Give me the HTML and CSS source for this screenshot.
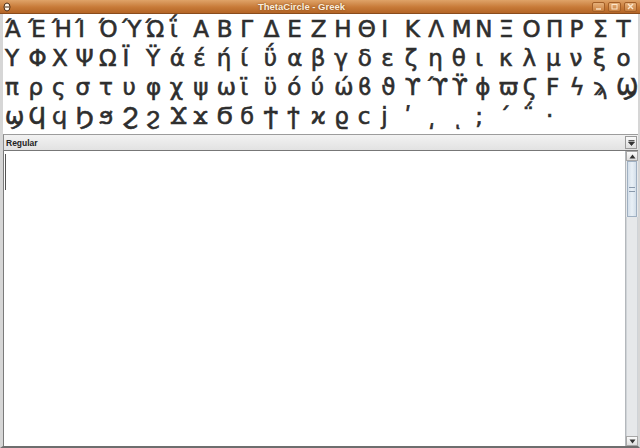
FILE: index.html
```html
<!DOCTYPE html>
<html lang="el">
<head>
    <meta charset="UTF-8">
    <title>ThetaCircle - Greek</title>
    <link rel="stylesheet" href="styles.css">
</head>
<body>
    <div class="window">
        <div class="titlebar">
            <svg class="app-icon" width="8" height="10" viewBox="0 0 8 10">
                <ellipse cx="4" cy="5" rx="3" ry="4" fill="#fff7ea" stroke="#4a2a10" stroke-width="1"/>
                <line x1="1.5" y1="5" x2="6.5" y2="5" stroke="#4a2a10" stroke-width="1"/>
            </svg>
            <div class="title">ThetaCircle - Greek</div>
            <div class="win-buttons">
                <div class="win-btn">
                    <svg width="7" height="7" viewBox="0 0 7 7"><line x1="1" y1="6" x2="6" y2="6" stroke="#fbe6cc" stroke-width="1.4"/></svg>
                </div>
                <div class="win-btn">
                    <svg width="7" height="7" viewBox="0 0 7 7"><rect x="1" y="1.5" width="5" height="4.5" fill="none" stroke="#fbe6cc" stroke-width="1"/></svg>
                </div>
                <div class="win-btn">
                    <svg width="7" height="7" viewBox="0 0 7 7"><path d="M1 1 L6 6 M6 1 L1 6" stroke="#fbe6cc" stroke-width="1.4"/></svg>
                </div>
            </div>
        </div>
        <div class="frame">
            <div class="charmap" id="charmap"></div>
            <div class="combo">
                <div class="combo-label">Regular</div>
                <div class="combo-btn">
                    <svg width="7" height="6" viewBox="0 0 7 6"><path d="M0.5 0.5 H6.5 M0.5 2 H6.5 L3.5 5.5 Z" fill="#333" stroke="#333" stroke-width="0.8"/></svg>
                </div>
            </div>
            <div class="editor">
                <div class="text-area">
                    <div class="caret"></div>
                </div>
                <div class="scrollbar">
                    <div class="arrow">
                        <svg width="7" height="5" viewBox="0 0 7 5"><path d="M0.5 4.5 H6.5 L3.5 0.5 Z" fill="#333"/></svg>
                    </div>
                    <div class="thumb"><div class="grip"></div></div>
                    <div class="track"></div>
                    <div class="arrow">
                        <svg width="7" height="5" viewBox="0 0 7 5"><path d="M0.5 0.5 H6.5 L3.5 4.5 Z" fill="#333"/></svg>
                    </div>
                </div>
            </div>
        </div>
    </div>
    <script>
        const rows = [
            'Ά Έ Ή Ί Ό Ύ Ώ ΐ Α Β Γ Δ Ε Ζ Η Θ Ι Κ Λ Μ Ν Ξ Ο Π Ρ Σ Τ',
            'Υ Φ Χ Ψ Ω Ϊ Ϋ ά έ ή ί ΰ α β γ δ ε ζ η θ ι κ λ μ ν ξ ο',
            'π ρ ς σ τ υ φ χ ψ ω ϊ ϋ ό ύ ώ ϐ ϑ ϒ ϓ ϔ ϕ ϖ Ϛ Ϝ ϟ ϡ Ϣ',
            'ϣ Ϥ ϥ Ϧ ϧ Ϩ ϩ Ϫ ϫ Ϭ ϭ Ϯ ϯ ϰ ϱ ϲ ϳ ʹ ͵ ͺ ; ΄ ΅ ·'
        ];
        const charmap = document.getElementById('charmap');
        rows.forEach(line => {
            const row = document.createElement('div');
            row.className = 'char-row';
            line.split(' ').forEach(ch => {
                const cell = document.createElement('span');
                cell.className = 'glyph';
                cell.textContent = ch;
                row.appendChild(cell);
            });
            charmap.appendChild(row);
        });
    </script>
</body>
</html>
```

FILE: styles.css
```css
body {
    margin: 0;
    width: 640px;
    height: 448px;
    overflow: hidden;
    font-family: 'DejaVu Sans', sans-serif;
    background: #ffffff;
}
.window {
    height: 448px;
    display: flex;
    flex-direction: column;
}
.titlebar {
    height: 14px;
    display: flex;
    align-items: center;
    background: linear-gradient(to bottom, #dfa368, #c77a38 55%, #b46526);
    border-bottom: 1px solid #8a4c1c;
    box-sizing: border-box;
}
.app-icon {
    margin-left: 3px;
    flex-shrink: 0;
}
.title {
    flex: 1;
    text-align: center;
    font-family: 'Liberation Sans', sans-serif;
    font-weight: bold;
    font-size: 9.5px;
    line-height: 13px;
    color: #fbeedd;
    text-shadow: 0 0 2px #7a4215;
}
.win-buttons {
    display: flex;
    gap: 3px;
    margin-right: 3px;
}
.win-btn {
    width: 13px;
    height: 10px;
    box-sizing: border-box;
    border: 1px solid #a35f28;
    border-radius: 2px;
    background: linear-gradient(to bottom, #e6b07a, #c9803f);
    display: flex;
    align-items: center;
    justify-content: center;
}
.frame {
    flex: 1;
    display: flex;
    flex-direction: column;
    border-left: 3px solid #d6d6d6;
    border-right: 2px solid #d6d6d6;
    border-bottom: 2px solid #6e6e6e;
    min-height: 0;
}
.charmap {
    background: #ffffff;
    padding: 1px 0 3px;
}
.char-row {
    display: grid;
    grid-template-columns: repeat(27, 1fr);
    height: 29px;
    line-height: 29px;
    font-family: 'DejaVu Sans', sans-serif;
    font-size: 23px;
    color: #2e2e2e;
    -webkit-text-stroke: 0.6px #2e2e2e;
}
.glyph {
    text-align: left;
    padding-left: 2px;
    white-space: nowrap;
}
.combo {
    height: 17px;
    box-sizing: border-box;
    display: flex;
    align-items: center;
    border-top: 1px solid #9c9c9c;
    border-bottom: 1px solid #777777;
    border-left: 1px solid #8c8c8c;
    background: linear-gradient(to bottom, #f2f2f2, #e2e2e2);
}
.combo-label {
    flex: 1;
    padding-left: 2px;
    font-family: 'Liberation Sans', sans-serif;
    font-weight: bold;
    font-size: 8.5px;
    color: #222;
}
.combo-btn {
    width: 12px;
    height: 13px;
    margin-right: 1px;
    box-sizing: border-box;
    border: 1px solid #9a9a9a;
    background: linear-gradient(to bottom, #fafafa, #dedede);
    display: flex;
    align-items: center;
    justify-content: center;
}
.editor {
    flex: 1;
    display: flex;
    background: #ffffff;
    border-left: 1px solid #7a7a7a;
    min-height: 0;
}
.text-area {
    flex: 1;
}
.caret {
    width: 1px;
    height: 36px;
    margin: 3px 0 0 1px;
    background: #555555;
}
.scrollbar {
    width: 12px;
    display: flex;
    flex-direction: column;
    background: #e6e8ea;
    border-left: 1px solid #b4b8bc;
}
.arrow {
    height: 10px;
    display: flex;
    align-items: center;
    justify-content: center;
    background: linear-gradient(to bottom, #fbfbfb, #e0e0e0);
    border: 1px solid #a8a8a8;
    box-sizing: border-box;
}
.thumb {
    height: 56px;
    margin: 0 1px;
    box-sizing: border-box;
    border: 1px solid #9fb0c2;
    background: linear-gradient(to right, #d4dfea, #e9f0f6, #d4dfea);
    display: flex;
    align-items: center;
    justify-content: center;
}
.grip {
    width: 6px;
    height: 5px;
    border-top: 1px solid #8a9aac;
    border-bottom: 1px solid #8a9aac;
    box-sizing: border-box;
}
.track {
    flex: 1;
    border-left: 1px solid #cfd3d7;
    border-right: 1px solid #cfd3d7;
}
```
